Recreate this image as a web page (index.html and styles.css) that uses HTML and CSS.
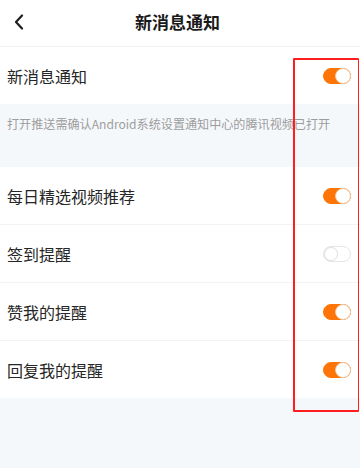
FILE: index.html
```html
<!DOCTYPE html>
<html lang="zh-CN">
<head>
<meta charset="utf-8">
<title>新消息通知</title>
<link rel="stylesheet" href="styles.css">
</head>
<body>
<div class="page">
  <header class="nav">
    <span class="back">
      <svg width="12" height="16" viewBox="0 0 12 16"><path d="M9 1.5 L3 8 L9 14.5" fill="none" stroke="#1f1f1f" stroke-width="2.2" stroke-linecap="round" stroke-linejoin="round"/></svg>
    </span>
    <h1 class="title">新消息通知</h1>
  </header>
  <div class="group">
    <div class="row"><span class="label">新消息通知</span><span class="switch on"></span></div>
  </div>
  <div class="notice">打开推送需确认Android系统设置通知中心的腾讯视频已打开</div>
  <div class="group">
    <div class="row"><span class="label">每日精选视频推荐</span><span class="switch on"></span></div>
    <div class="row"><span class="label">签到提醒</span><span class="switch"></span></div>
    <div class="row"><span class="label">赞我的提醒</span><span class="switch on"></span></div>
    <div class="row last"><span class="label">回复我的提醒</span><span class="switch on"></span></div>
  </div>
  <div class="rest"></div>
  <div class="mark"></div>
</div>
</body>
</html>
```
FILE: styles.css
```css
html, body {
  margin: 0;
  padding: 0;
}
body {
  font-family: "Noto Sans CJK SC", "Noto Sans", sans-serif;
  background: #f5f8fb;
  color: #222;
}
.page {
  position: relative;
  width: 360px;
  height: 468px;
  overflow: hidden;
  display: flex;
  flex-direction: column;
}
.nav {
  position: relative;
  height: 46px;
  background: #fff;
  border-bottom: 1px solid #f2f2f2;
  display: flex;
  align-items: center;
  justify-content: center;
  flex: none;
}
.back {
  position: absolute;
  left: 13px;
  top: 14px;
  display: flex;
}
.title {
  margin: 0 0 4px -5px;
  font-size: 17px;
  font-weight: 700;
  color: #1a1a1a;
}
.group {
  background: #fff;
  flex: none;
}
.row {
  height: 57px;
  display: flex;
  align-items: center;
  justify-content: space-between;
  padding: 0 9px 0 7px;
  border-bottom: 1px solid #f3f3f3;
}
.group:first-of-type .row {
  height: 57px;
  border-bottom: none;
}
.row.last {
  border-bottom: none;
}
.label {
  font-size: 16px;
  color: #262626;
}
.notice {
  height: 63px;
  box-sizing: border-box;
  padding: 11px 0 0 7px;
  font-size: 12.1px;
  color: #9d9d9d;
  white-space: nowrap;
  flex: none;
}
.rest {
  flex: 1;
}
.switch {
  position: relative;
  width: 28px;
  height: 16px;
  box-sizing: border-box;
  border-radius: 8px;
  border: 1px solid #e6e6e6;
  background: #fff;
}
.switch::after {
  content: "";
  position: absolute;
  top: 0;
  left: 0;
  width: 14px;
  height: 14px;
  box-sizing: border-box;
  border-radius: 50%;
  background: #fff;
  border: 1px solid #e2e2e2;
  box-shadow: 0 0 1px rgba(0,0,0,0.08);
}
.switch.on {
  background: #ff7406;
  border-color: #ff7406;
}
.switch.on::after {
  left: auto;
  right: -1px;
  top: -1px;
  width: 16px;
  height: 16px;
  border: 1.5px solid #f3c79a;
}
.mark {
  position: absolute;
  left: 293px;
  top: 58px;
  width: 66px;
  height: 354px;
  box-sizing: border-box;
  border: 2px solid #ff1d1d;
  border-right-width: 1.5px;
  border-radius: 1px;
}
```
